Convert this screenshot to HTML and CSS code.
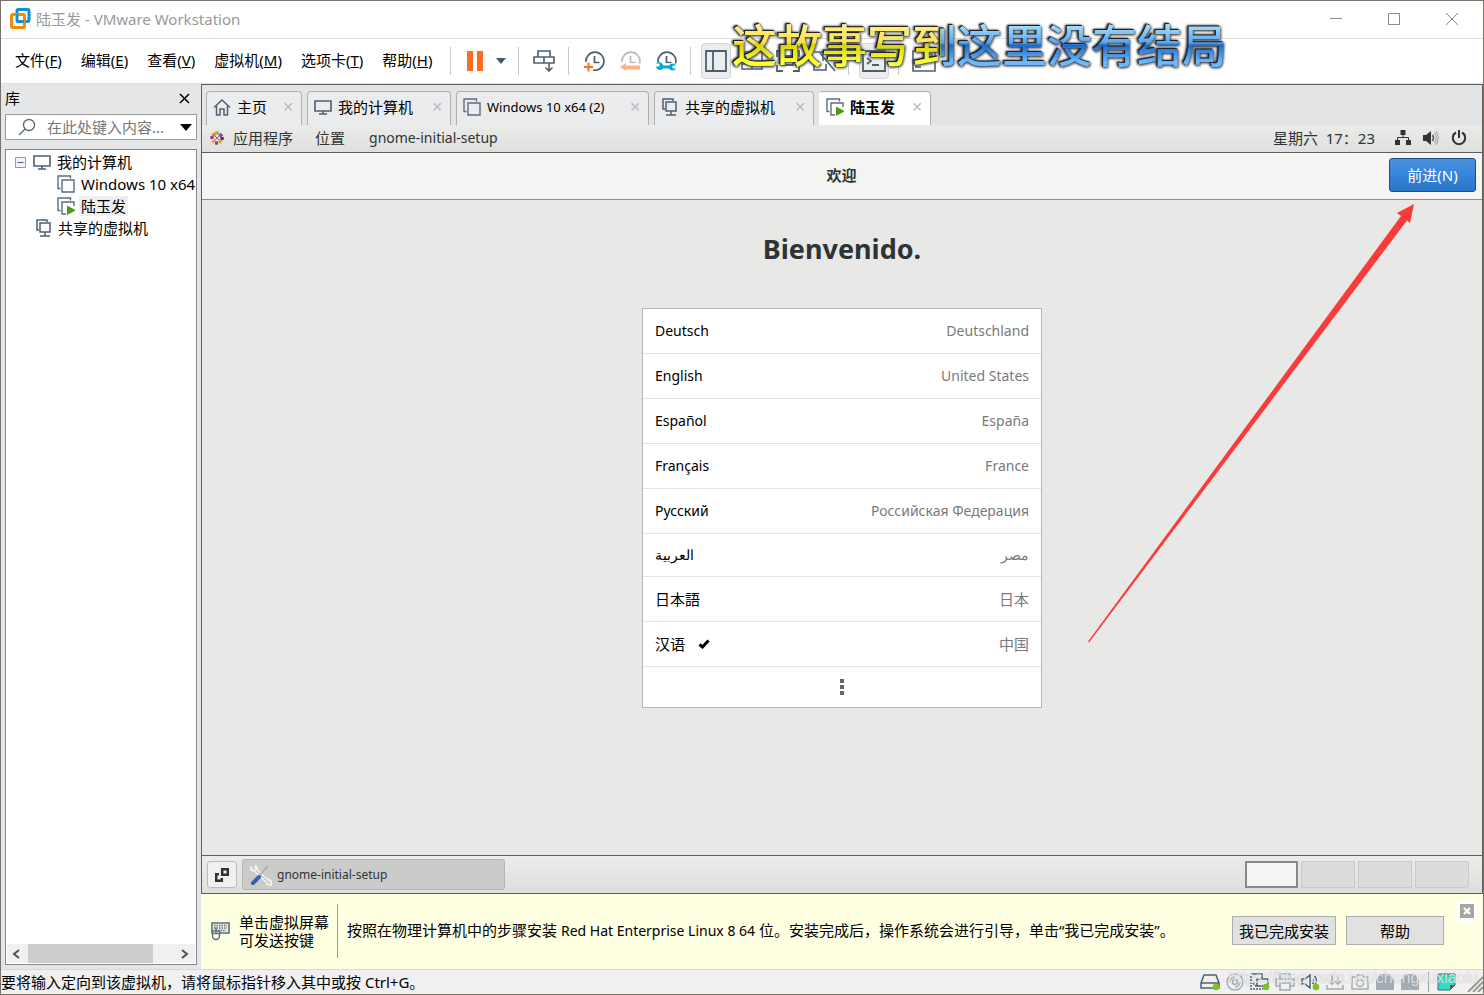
FILE: index.html
```html
<!DOCTYPE html>
<html lang="zh-CN">
<head>
<meta charset="utf-8">
<title>陆玉发 - VMware Workstation</title>
<link rel="stylesheet" href="styles.css">
</head>
<body>
<svg class="defs" aria-hidden="true">
  <symbol id="monitor" viewBox="0 0 18 16"><path d="M1 2h16v10H1z" fill="none" stroke="#4d6070" stroke-width="1.6"/><path d="M9 12v2.5M5 15h8" stroke="#4d6070" stroke-width="1.6"/></symbol>
  <symbol id="vm" viewBox="0 0 18 18"><path d="M3.500 13.500H1V1h12.500v2.500M5 5h12v12H5z" fill="none" stroke="#5d6e7c" stroke-width="1.400"/></symbol>
  <symbol id="vmrun" viewBox="0 0 18 18"><path d="M3.500 13.500H1V1h12.500v2.500M9 17H5V5h12v4" fill="none" stroke="#5d6e7c" stroke-width="1.400"/><path d="M10 8.500v9.500l9-4.700z" fill="#4c9a14"/></symbol>
  <symbol id="shared" viewBox="0 0 16 18"><path d="M3 11H1V1h10v2M4 4h10v9H4zM9 13v4M4 17h10" fill="none" stroke="#4d6070" stroke-width="1.500"/></symbol>
  <symbol id="clock" viewBox="0 0 22 22"><path d="M3 12a9 9 0 1 1 7 8M11.500 6v6.500h5" fill="none" stroke="currentColor" stroke-width="1.700"/></symbol>
</svg>

<header class="titlebar">
  <svg class="logo" width="21" height="21" viewBox="0 0 21 21"><rect x="7" y="1.500" width="12" height="12" rx="1.500" fill="none" stroke="#0d91d1" stroke-width="3"/><rect x="1.500" y="6.500" width="13" height="13" rx="1.500" fill="none" stroke="#f38b00" stroke-width="3"/><path d="M7 6v7.500h7" fill="none" stroke="#0d91d1" stroke-width="2"/></svg>
  <h1 class="title">陆玉发 - VMware Workstation</h1>
  <div class="winctl">
    <button aria-label="最小化"><svg width="14" height="14"><path d="M1 6.500h12" stroke="#888"/></svg></button>
    <button aria-label="最大化"><svg width="14" height="14"><path d="M1.500 1.500h11v11h-11z" stroke="#888" fill="none"/></svg></button>
    <button aria-label="关闭"><svg width="14" height="14"><path d="M1 1l12 12M13 1L1 13" stroke="#888"/></svg></button>
  </div>
</header>

<nav class="menubar">
  <div class="menus">
    <button>文件(<u>F</u>)</button><button>编辑(<u>E</u>)</button><button>查看(<u>V</u>)</button><button>虚拟机(<u>M</u>)</button><button>选项卡(<u>T</u>)</button><button>帮助(<u>H</u>)</button>
  </div>
  <div class="toolbar">
    <i class="sep"></i>
    <button class="tool pause" aria-label="挂起"><svg width="18" height="22"><path d="M1 1h6v20H1zM11 1h6v20h-6z" fill="#ff6c1f"/></svg></button>
    <button class="caret" aria-label="电源选项"><svg width="10" height="6"><path d="M0 0h10L5 6z" fill="#44586a"/></svg></button>
    <i class="sep"></i>
    <button class="tool" aria-label="发送 Ctrl+Alt+Del"><svg width="22" height="22" fill="none" stroke="#4d6070" stroke-width="1.600"><path d="M5 1h12v6H5zM1 7h10v6H1zM11 7h10v6H11zM16 13v8M12.500 17.500L16 21l3.500-3.500"/></svg></button>
    <i class="sep"></i>
    <button class="tool slate" aria-label="拍摄快照"><svg width="22" height="22"><use href="#clock"/><path d="M1 17h9M5.500 12.500v9" stroke="#ff6c1f" stroke-width="2"/></svg></button>
    <button class="tool faded" aria-label="恢复快照"><svg width="22" height="22"><use href="#clock"/><path d="M0 13.500h22v9H0z" fill="#fff"/><path d="M1 17l6-4v2.500h14v4H7V21z" fill="#ffb08a"/></svg></button>
    <button class="tool slate" aria-label="管理快照"><svg width="22" height="22"><use href="#clock"/><path d="M0 13.500h22v9H0z" fill="#fff"/><path d="M1 13.500h3.500v3H1a4 4 0 0 0 7 2h6a4 4 0 0 0 7 0h-3.500v-3H21a4 4 0 0 0-7 0H8a4 4 0 0 0-7-2z" fill="#00a9ce"/></svg></button>
    <i class="sep"></i>
    <button class="tool slate on" aria-label="显示库"><svg width="22" height="22" fill="none" stroke="currentColor" stroke-width="1.800"><path d="M1 1h20v20H1zM8 1v20"/></svg></button>
    <button class="tool slate" aria-label="缩略图栏"><svg width="22" height="22" fill="none" stroke="currentColor" stroke-width="1.600"><path d="M1 2h20v17H1zM1 14h20M11 14v5"/></svg></button>
    <button class="tool slate" aria-label="全屏"><svg width="24" height="22" fill="none" stroke="currentColor" stroke-width="1.800"><path d="M1 7V1h6M17 1h6v6M23 15v6h-6M7 21H1v-6M7 6h10v9H7z"/></svg></button>
    <button class="tool slate" aria-label="Unity"><svg width="24" height="22" fill="none" stroke="currentColor" stroke-width="1.600"><path d="M2 2h9v9M2 11v9h12v-6M8 3l15 18"/></svg></button>
    <i class="sep"></i>
    <button class="tool slate on" aria-label="控制台视图"><svg width="24" height="22" fill="none" stroke="currentColor" stroke-width="1.800"><path d="M1 1h22v20H1zM5 8l4 3-4 3M10 15h7"/></svg></button>
    <i class="sep"></i>
    <button class="tool slate" aria-label="拉伸"><svg width="24" height="22" fill="none" stroke="currentColor" stroke-width="1.600"><path d="M1 1h22v20H1zM4 13v4h5M16 4h4v4"/></svg></button>
  </div>
</nav>
<div class="lyric">这故事写到这里没有结局</div>

<div class="main">
  <aside class="sidebar">
    <div class="sidehead"><h2>库</h2><button aria-label="关闭库"><svg width="11" height="11"><path d="M1 1l9 9M10 1L1 10" stroke="#000" stroke-width="1.500"/></svg></button></div>
    <label class="search">
      <svg width="18" height="18" viewBox="0 0 18 18"><circle cx="11" cy="7" r="5.500" fill="none" stroke="#5d6e7c" stroke-width="1.400"/><path d="M7 11l-6 6" stroke="#5d6e7c" stroke-width="1.500"/></svg>
      <input type="text" aria-label="搜索库" placeholder="在此处键入内容...">
      <svg width="12" height="7"><path d="M0 0h12L6 7z"/></svg>
    </label>
    <div class="treebox">
      <ul class="tree">
        <li><svg class="box" width="11" height="11"><path d="M.5.5h10v10H.5z" fill="#f4f4f4" stroke="#999"/><path d="M2.500 5.500h6" stroke="#3b5bb0"/></svg><svg width="18" height="16"><use href="#monitor"/></svg><span>我的计算机</span></li>
        <li class="child"><svg width="18" height="18"><use href="#vm"/></svg><span>Windows 10 x64</span></li>
        <li class="child"><svg width="18" height="18"><use href="#vmrun"/></svg><span class="sel">陆玉发</span></li>
        <li class="second"><svg width="16" height="18"><use href="#shared"/></svg><span>共享的虚拟机</span></li>
      </ul>
      <div class="hscroll">
        <svg width="8" height="10"><path d="M7 1L2 5l5 4" fill="none" stroke="#505050" stroke-width="2"/></svg>
        <div class="track"><div class="thumb"></div></div>
        <svg width="8" height="10"><path d="M1 1l5 4-5 4" fill="none" stroke="#505050" stroke-width="2"/></svg>
      </div>
    </div>
  </aside>

  <section class="work">
    <div class="screen">
      <div class="tabs">
        <div class="tab t1"><svg width="18" height="18" fill="none" stroke="#4d6070" stroke-width="1.500"><path d="M1 9.500L9 2l8 7.500M3.500 8v9H7v-6h4v6h3.500V8"/></svg><span>主页</span><button aria-label="关闭标签">✕</button></div>
        <div class="tab t2"><svg width="18" height="16"><use href="#monitor"/></svg><span>我的计算机</span><button aria-label="关闭标签">✕</button></div>
        <div class="tab t3"><svg width="18" height="18"><use href="#vm"/></svg><span class="latin">Windows 10 x64 (2)</span><button aria-label="关闭标签">✕</button></div>
        <div class="tab t4"><svg width="18" height="18" viewBox="-1 0 18 18"><use href="#shared" width="16" height="18"/></svg><span>共享的虚拟机</span><button aria-label="关闭标签">✕</button></div>
        <div class="tab t5 active"><svg width="18" height="18"><use href="#vmrun"/></svg><span>陆玉发</span><button aria-label="关闭标签">✕</button></div>
      </div>
      <div class="topbar">
        <svg width="14" height="14" viewBox="-7 -7 14 14"><g stroke-width="3.400"><path d="M-2-5h4" stroke="#93c13c"/><path d="M2.500-4l2.500 2.500" stroke="#a4388f"/><path d="M5-1v3" stroke="#3a3384"/><path d="M4.500 2L2 5" stroke="#f0a52c"/><path d="M-2 5h3" stroke="#5b54a4"/><path d="M-2.500 4.500l-2-2" stroke="#f0a52c"/><path d="M-5 1v-3" stroke="#a4388f"/><path d="M-4.500-2l2.500-2.500" stroke="#e8832d"/></g><path d="M-3-3L3 3M3-3L-3 3" stroke="#9a5ba8" stroke-width="1"/></svg>
        <button class="apps">应用程序</button><button class="places">位置</button><span>gnome-initial-setup</span>
        <time>星期六&nbsp; 17：23</time>
        <svg width="16" height="16" fill="#2e3436"><path d="M5.500 0h5v5h-5zM0 10h5v5H0zM11 10h5v5h-5z"/><path d="M8 5v3M2.500 10V7.500h11V10" fill="none" stroke="#2e3436"/></svg>
        <svg width="16" height="16"><path d="M0 5h3l5-4v14l-5-4H0z" fill="#2e3436"/><path d="M9.500 5q2 3 0 6" stroke="#555" fill="none" stroke-width="1.500"/><path d="M11.500 3q3.500 5 0 10M13 1q4.500 7 0 14" stroke="#aaa" fill="none" stroke-width="1.300"/></svg>
        <svg width="16" height="16"><path d="M5 2.500a6.200 6.200 0 1 0 6 0M8 0v8" fill="none" stroke="#2e3436" stroke-width="2"/></svg>
      </div>
      <div class="headerbar"><h2>欢迎</h2><button>前进(N)</button></div>
      <div class="welcome">
        <h3>Bienvenido.</h3>
        <ul class="langs">
          <li><span>Deutsch</span><em>Deutschland</em></li>
          <li><span>English</span><em>United States</em></li>
          <li><span>Español</span><em>España</em></li>
          <li><span>Français</span><em>France</em></li>
          <li><span>Русский</span><em>Российская Федерация</em></li>
          <li class="arabic"><span lang="ar">العربية</span><em lang="ar">مصر</em></li>
          <li class="cjk"><span lang="ja">日本語</span><em lang="ja">日本</em></li>
          <li class="cjk"><span>汉语</span><svg width="12" height="10"><path d="M1.500 5.500L4.500 8 10.500 1.500" fill="none" stroke="#000" stroke-width="3"/></svg><em>中国</em></li>
          <li class="more"><button aria-label="更多"><svg width="4" height="16" fill="#666"><path d="M0 0h4v4H0zM0 6h4v4H0zM0 12h4v4H0z"/></svg></button></li>
        </ul>
      </div>
      <div class="taskbar">
        <button class="desk" aria-label="显示桌面"><svg width="14" height="14" fill="none" stroke="#2e3436" stroke-width="2.500"><path d="M7.200 1.200h5.600v5.600H7.200zM4 6.200H1.200v6.600h5.600V10"/></svg></button>
        <button class="task"><svg width="22" height="22"><path d="M3 4l15 14" stroke="#f4f4f4" stroke-width="4"/><path d="M3 4l15 14" stroke="#9a9a9a" stroke-width="1"/><path d="M1 2v4l4 1 2-3-2-3M16 20l5 1v-4l-3-2" fill="none" stroke="#eee" stroke-width="2"/><path d="M18 2l-8 9" stroke="#aaa" stroke-width="1.500"/><path d="M9 13l-6 6" stroke="#3465a4" stroke-width="4" stroke-linecap="round"/></svg>gnome-initial-setup</button>
        <div class="spaces"><button class="cur" aria-label="工作区 1"></button><button aria-label="工作区 2"></button><button aria-label="工作区 3"></button><button class="last" aria-label="工作区 4"></button></div>
      </div>
      <svg class="arrow" width="328" height="440" viewBox="0 0 328 440"><path d="M0 437.500L313 12l-4-3L326 0l-4 19-3-2.500L1 438.500z" fill="#fb3a3a"/></svg>
    </div>
    <div class="hint">
      <svg width="19" height="20" fill="none" stroke="#5d6e7c"><path d="M1 2h17v10H1z" fill="#eef0e4" stroke-width="1.600"/><path d="M3 4.500h13M3 7h13M7 9.500h8" stroke-dasharray="1.500 1" stroke-width="1.400"/><path d="M1.500 10h7v5a3.500 3.500 0 0 1-7 0zM5 6.500V12M1.500 12.500h7" fill="#ffffe1" stroke-width="1.400"/></svg>
      <p class="grab">单击虚拟屏幕<br>可发送按键</p>
      <p class="steps">按照在物理计算机中的步骤安装 <span>Red Hat Enterprise Linux 8 64</span> 位。安装完成后，操作系统会进行引导，单击“我已完成安装”。</p>
      <button>我已完成安装</button><button class="help">帮助</button>
      <button class="dismiss" aria-label="关闭提示"><svg width="14" height="14"><path d="M0 0h14v14H0z" fill="#a6a6a6"/><path d="M4 4l6 6M10 4l-6 6" stroke="#fff" stroke-width="2.400"/></svg></button>
    </div>
  </section>
</div>

<footer class="status">
  <span>要将输入定向到该虚拟机，请将鼠标指针移入其中或按 Ctrl+G。</span>
  <div class="tray">
    <svg width="20" height="18" fill="none" stroke="#4d6070" stroke-width="1.500"><path d="M4 2h12l3 8v5H1v-5zM1 10h18"/><circle cx="16" cy="14" r="3.300" fill="#7ac41c" stroke="none"/></svg>
    <svg width="20" height="18" fill="none" stroke="#a4adb4" stroke-width="1.500"><circle cx="10" cy="9" r="8"/><circle cx="10" cy="9" r="2.500"/><path d="M5 9a5 5 0 0 1 5-5M15 9a5 5 0 0 1-5 5"/></svg>
    <svg width="20" height="18" fill="none" stroke="#4d6070" stroke-width="1.500"><path d="M1 1h11v5M7 6h11v7H7z"/><path d="M1 3v13h12M3 10l4 4" stroke-dasharray="2 1"/><circle cx="16" cy="14" r="3.300" fill="#7ac41c" stroke="none"/></svg>
    <svg width="20" height="18" fill="none" stroke="#a4adb4" stroke-width="1.600"><path d="M5 6V1h10v5M5 13H1V6h18v7h-4M5 10h10v7H5z"/></svg>
    <svg width="20" height="18" fill="none" stroke="#4d6070" stroke-width="1.500"><path d="M2 6h3l5-4v13l-5-4H2zM12.500 6q2 3 0 5M14.500 3q4 5 0 9"/><circle cx="16" cy="14" r="3.300" fill="#7ac41c" stroke="none"/></svg>
    <svg width="20" height="18" fill="none" stroke="#a4adb4" stroke-width="1.600"><path d="M2 12v4h16v-4M7 2v9M4 8l3 3 3-3M13 3v8M10.500 8.500L13 11l3-3"/></svg>
    <svg width="20" height="18" fill="none" stroke="#a4adb4" stroke-width="1.500"><path d="M2 4h4l2-2h4l2 2h4v12H2z"/><circle cx="10" cy="10" r="3.500"/></svg>
    <svg width="20" height="18" fill="#a4adb4"><path d="M3 4l2-3h10l2 3v2h2v11H1V6h2z"/></svg>
    <svg width="20" height="18" fill="#a4adb4"><path d="M3 4l2-3h10l2 3v2h2v11H1V6h2z"/></svg>
    <i></i>
    <svg width="20" height="18"><path d="M1 1h17v11l-5 5H1z" fill="#36dbc4" stroke="#4d6070"/><path d="M18 12h-5v5z" fill="#4d6070"/></svg>
    <svg class="grip" width="16" height="16"><path d="M1 16L16 1M6 16L16 6M11 16l5-5" stroke="#999" stroke-width="2"/></svg>
  </div>
  <div class="watermark">https://blog.csdn.net/chengxuxiaolu</div>
</footer>
</body>
</html>
```
FILE: styles.css
```css
* { box-sizing: border-box; }
body {
  margin: 0; height: 100vh; display: flex; flex-direction: column; position: relative; overflow: hidden;
  border: 1px solid #77736c; background: #e5e6e8; color: #000;
  font: 15px/20px "Noto Sans", "Noto Sans CJK SC", sans-serif;
}
button { font: inherit; color: inherit; background: none; border: 0; padding: 0; margin: 0; }
h1, h2, h3, p, ul { margin: 0; padding: 0; font-size: inherit; font-weight: normal; }
ul { list-style: none; }
svg { flex: none; display: block; }
.defs { position: absolute; width: 0; height: 0; }

.titlebar { height: 38px; flex: none; display: flex; align-items: center; background: #fff; border-bottom: 1px solid #e0e0e0; padding: 0 2px 2px 9px; }
.title { color: #999; margin-left: 5px; flex: 1; }
.winctl { display: flex; }
.winctl button { width: 58px; display: flex; justify-content: center; }

.menubar { height: 45px; flex: none; display: flex; align-items: center; background: #fff; border-bottom: 1px solid #e0e0e0; padding-left: 14px; }
.menus { display: flex; gap: 19px; width: 429px; padding-bottom: 3px; white-space: nowrap; }
.toolbar { display: flex; align-items: center; }
.sep { width: 1px; height: 28px; background: #c8c8c8; margin: 0 7px 0 6px; }
.tool { width: 36px; height: 36px; display: flex; align-items: center; justify-content: center; color: #4d6070; }
.pause { width: 34px; }
.caret { width: 20px; padding-right: 2px; display: flex; justify-content: center; }
.faded { color: #b4bcc2; }
.on { width: 30px; margin: 0 3px; background: #ebecee; border: 1px solid #d4d6d9; border-radius: 4px; }
.lyric {
  position: absolute; left: 731px; top: 13px; font: 500 45px/60px "Noto Sans CJK SC", sans-serif; white-space: nowrap; color: transparent;
  background:
    linear-gradient(#fff080 20%, #ffe04a 48%, #d8d000 50%, #ffff30 80%) 0 0 / 209px 100% no-repeat,
    linear-gradient(#a0dcff 20%, #55a5f0 48%, #1c68c8 52%, #6ab8ff 80%);
  -webkit-background-clip: text; background-clip: text;
  filter: drop-shadow(-1px -1px 0 #222) drop-shadow(-1px 0 1px #333) drop-shadow(1px 1px 1px #555);
}

.main { flex: 1; min-height: 0; display: flex; }
.sidebar { width: 200px; flex: none; padding: 0 4px 4px; display: flex; flex-direction: column; }
.sidehead { height: 30px; display: flex; align-items: center; justify-content: space-between; padding-bottom: 2px; }
.sidehead button { margin-right: 7px; }
.search { height: 26px; flex: none; width: 192px; background: #fff; border: 1px solid #999; display: flex; align-items: center; padding: 0 4px 0 12px; margin-bottom: 9px; }
.search input { flex: 1; min-width: 0; border: 0; outline: 0; background: none; font: inherit; padding: 0 0 0 11px; }
.search input::placeholder { color: #777; opacity: 1; }
.treebox { flex: 1; width: 192px; background: #fff; border: 1px solid #828790; padding: 1px 1px 1px; display: flex; flex-direction: column; overflow: hidden; }
.tree { flex: 1; }
.tree li { height: 22px; display: flex; align-items: center; white-space: nowrap; padding-left: 8px; gap: 6px; }
.tree .box { margin-right: 1px; }
.tree .child { padding-left: 50px; gap: 5px; }
.tree .child span { padding: 0 2px; margin-left: -1px; }
.tree .second { padding-left: 29px; }
.tree .sel { background: #efefef; }
.hscroll { height: 19px; background: #f0f0f0; display: flex; align-items: center; padding: 0 6px 0 5px; }
.track { flex: 1; height: 100%; margin: 0 8px; }
.thumb { width: 86%; height: 100%; background: #cdcdcd; }

.work { flex: 1; min-width: 0; display: flex; flex-direction: column; }
.screen { flex: 1; position: relative; display: flex; flex-direction: column; border: 1px solid #5c5d5e; }
.tabs { height: 40px; flex: none; display: flex; align-items: flex-end; gap: 5px; padding-left: 4px; background: #e3e4e6; }
.tab { height: 34px; display: flex; align-items: center; gap: 6px; padding: 0 7px 3px 6px; background: #ebecee; border: 1px solid #aeb0b2; border-bottom: 0; border-radius: 4px 4px 0 0; white-space: nowrap; }
.tab button { margin-left: auto; color: #bbb; font: 14px/14px "DejaVu Sans", sans-serif; }
.t1 { width: 96px; } .t2 { width: 144px; } .t3 { width: 193px; } .t4 { width: 160px; } .t5 { width: 112px; }
.latin { font-size: 13px; }
.active { background: #fff; font-weight: bold; border-left-color: #fff; }

.topbar { height: 28px; flex: none; display: flex; align-items: center; padding: 0 15px 2px 8px; background: linear-gradient(#ebebea, #dfdfde); border-bottom: 1px solid #5c5d5e; color: #2e3436; font-size: 14px; }
.apps { font-size: 15px; margin: 0 22px 0 9px; }
.places { font-size: 15px; margin-right: 24px; }
.topbar time { margin: 0 8px 0 auto; font: 15px/20px "Noto Sans", "Noto Sans CJK TC", sans-serif; }
.topbar time ~ svg { margin-left: 12px; }
.headerbar { height: 47px; flex: none; display: flex; align-items: center; justify-content: flex-end; padding: 0 6px 2px 5px; background: #f4f4f3; border-bottom: 1px solid #8d8f8d; }
.headerbar h2 { flex: 1; text-align: center; padding-left: 87px; font-weight: bold; color: #2e3436; }
.headerbar button { width: 87px; height: 34px; color: #fff; background: linear-gradient(#4a90d9, #3584dc 50%, #2a76c6); border: 1px solid #1c5187; border-radius: 3px; }
.welcome { flex: 1; background: #e8e8e6; display: flex; flex-direction: column; align-items: center; }
.welcome h3 { font: bold 27px/40px "Noto Sans", sans-serif; color: #2e3436; margin: 29px 0 39px; }
.langs { width: 400px; background: #fff; border: 1px solid #b6b6b3; font-size: 14px; }
.langs li { height: 45px; display: flex; align-items: center; padding: 0 12px; border-bottom: 1px solid #e3e3e3; }
.langs em { font-style: normal; color: #7a7a7a; margin-left: auto; }
.langs svg { margin-left: 13px; }
.langs .arabic { height: 43px; }
.langs .cjk { font-size: 15px; padding-bottom: 1px; }
.langs .more { height: 40px; border: 0; justify-content: center; }
.langs .more svg { margin: 0; }
.taskbar { height: 38px; flex: none; display: flex; align-items: center; gap: 5px; padding: 0 13px 0 5px; border-top: 1px solid #5c5d5e; background: linear-gradient(#ececeb, #dededd); }
.desk { width: 30px; height: 27px; display: flex; align-items: center; justify-content: center; background: #f0f0ef; border: 1px solid #bbb; border-radius: 3px; }
.task { width: 263px; height: 31px; display: flex; align-items: center; gap: 5px; padding-left: 7px; background: #cbcbca; border: 1px solid #b4b4b2; border-radius: 3px; color: #2e3436; font-size: 12px; }
.spaces { margin-left: auto; display: flex; gap: 3px; }
.spaces button { width: 54px; height: 27px; background: #dcdcdb; border: 1px solid #cacac8; }
.spaces .cur { width: 53px; background: #f5f4f3; border: 2px solid #888; }
.spaces .last { border-radius: 0 3px 3px 0; }
.arrow { position: absolute; right: 66px; top: 119px; }

.hint { height: 75px; flex: none; display: flex; align-items: center; background: #ffffe1; padding: 0 6px 2px 10px; }
.grab { line-height: 18px; margin-left: 9px; padding: 9px 8px 9px 0; border-right: 1px solid #999; white-space: nowrap; }
.steps { flex: 1; padding-left: 9px; white-space: nowrap; }
.steps span { font-size: 14px; }
.hint button { width: 104px; height: 29px; background: #e1e1e1; border: 1px solid #adadad; margin-right: 10px; line-height: 16px; }
.hint .help { width: 98px; margin-right: 13px; }
.hint .dismiss { width: 20px; height: 20px; padding: 2px; margin: 7px 0 0; border: 1px solid #fff; background: #fff; align-self: flex-start; }

.status { height: 25px; flex: none; display: flex; align-items: center; justify-content: space-between; background: #f0f0f0; border-top: 1px solid #d7d7d7; position: relative; }
.tray { display: flex; align-items: center; gap: 5px; }
.tray i { width: 1px; height: 20px; background: #999; margin: 0 3px; }
.grip { align-self: flex-end; margin-left: 5px; }
.watermark { position: absolute; right: 5px; bottom: 6px; font: 16px/20px "Liberation Sans", sans-serif; color: rgba(255,255,255,.7); text-shadow: 0 0 1px rgba(120,120,120,.5); }
```
